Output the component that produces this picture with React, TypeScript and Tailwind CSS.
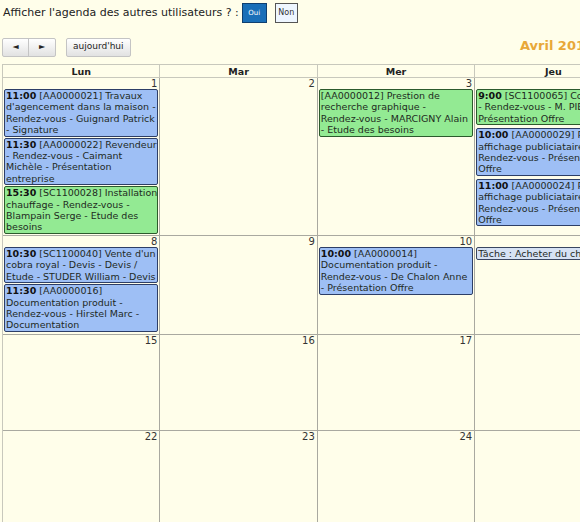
import React from "react";

type Ev = { time?: string; lines: string[]; color: "blue" | "green" | "task" };

const days = ["Lun", "Mar", "Mer", "Jeu", "Ven", "Sam", "Dim"];

const weeks: { num: number; gap?: boolean; events: Ev[] }[][] = [
  [
    {
      num: 1,
      events: [
        {
          time: "11:00",
          color: "blue",
          lines: [" [AA0000021] Travaux", "d'agencement dans la maison -", "Rendez-vous - Guignard Patrick", "- Signature"],
        },
        {
          time: "11:30",
          color: "blue",
          lines: [" [AA0000022] Revendeur", "- Rendez-vous - Caimant", "Michèle - Présentation", "entreprise"],
        },
        {
          time: "15:30",
          color: "green",
          lines: [" [SC1100028] Installation", "chauffage - Rendez-vous -", "Blampain Serge - Etude des", "besoins"],
        },
      ],
    },
    { num: 2, events: [] },
    {
      num: 3,
      events: [
        {
          color: "green",
          lines: ["[AA0000012] Prestion de", "recherche graphique -", "Rendez-vous - MARCIGNY Alain", "- Etude des besoins"],
        },
      ],
    },
    {
      num: 4,
      gap: true,
      events: [
        {
          time: "9:00",
          color: "green",
          lines: [" [SC1100065] Conseil", "- Rendez-vous - M. PIERRE -", "Présentation Offre"],
        },
        {
          time: "10:00",
          color: "blue",
          lines: [" [AA0000029] Pack", "affichage publiciataire -", "Rendez-vous - Présentation", "Offre"],
        },
        {
          time: "11:00",
          color: "blue",
          lines: [" [AA0000024] Pack", "affichage publiciataire -", "Rendez-vous - Présentation", "Offre"],
        },
      ],
    },
    { num: 5, events: [] },
    { num: 6, events: [] },
    { num: 7, events: [] },
  ],
  [
    {
      num: 8,
      events: [
        {
          time: "10:30",
          color: "blue",
          lines: [" [SC1100040] Vente d'un", "cobra royal - Devis - Devis /", "Etude - STUDER William - Devis"],
        },
        {
          time: "11:30",
          color: "blue",
          lines: [" [AA0000016]", "Documentation produit -", "Rendez-vous - Hirstel Marc -", "Documentation"],
        },
      ],
    },
    { num: 9, events: [] },
    {
      num: 10,
      events: [
        {
          time: "10:00",
          color: "blue",
          lines: [" [AA0000014]", "Documentation produit -", "Rendez-vous - De Chalon Anne", "- Présentation Offre"],
        },
      ],
    },
    { num: 11, events: [{ color: "task", lines: ["Tâche : Acheter du chocolat"] }] },
    { num: 12, events: [] },
    { num: 13, events: [] },
    { num: 14, events: [] },
  ],
  [15, 16, 17, 18, 19, 20, 21].map((n) => ({ num: n, events: [] })),
  [22, 23, 24, 25, 26, 27, 28].map((n) => ({ num: n, events: [] })),
];

const rowHeights = ["h-[158px]", "h-[99px]", "h-[96px]", "h-[96px]"];

function Event({ ev, gap }: { ev: Ev; gap?: boolean }) {
  const cls =
    ev.color === "blue"
      ? "bg-[#9ebff5] border-[#2d3e66]"
      : ev.color === "green"
      ? "bg-[#93ea93] border-[#2c5a2c]"
      : "bg-[#d6e2f4] border-[#3a4660]";
  return (
    <div
      className={`mx-[1px] ${gap ? "mb-[3px]" : "mb-[1px]"} border rounded-[2px] px-[1px] overflow-hidden whitespace-nowrap text-[#1e2a1e] ${cls}`}
    >
      {ev.lines.map((l, i) => (
        <div key={i}>
          {i === 0 && ev.time && <b className="text-[#111]">{ev.time}</b>}
          {l}
        </div>
      ))}
    </div>
  );
}

export default function App() {
  return (
    <div className="w-[580px] h-[522px] overflow-hidden bg-[#fffeea] text-[#222] font-['DejaVu_Sans',Verdana,sans-serif]">
      {/* filtre */}
      <div className="flex items-center h-[26px] pl-[3px] text-[11px]">
        <span>Afficher l'agenda des autres utilisateurs ? :</span>
        <span className="ml-[3px] w-[25px] h-[20px] flex items-center justify-center bg-[#1a6fb8] border border-[#0f3f70] text-white text-[7px]">
          Oui
        </span>
        <span className="ml-[8px] w-[23px] h-[20px] flex items-center justify-center bg-[#eef6ff] border border-[#555] text-[#333] text-[8px]">
          Non
        </span>
      </div>

      <div className="w-[1102px] ml-[2px]">
        {/* barre de navigation */}
        <div className="grid grid-cols-3 items-center h-[38px] pt-[4px]">
          <div className="flex items-center gap-[10px] text-[9px]">
            <div className="flex h-[19px] border border-[#c4c4c4] rounded-[2px] bg-gradient-to-b from-white to-[#e2e2e2]">
              <span className="w-[26px] flex items-center justify-center text-[8px] border-r border-[#c4c4c4]">◄</span>
              <span className="w-[26px] flex items-center justify-center text-[8px]">►</span>
            </div>
            <span className="h-[19px] px-[6px] flex items-center border border-[#c4c4c4] rounded-[2px] bg-gradient-to-b from-white to-[#e2e2e2]">
              aujourd'hui
            </span>
          </div>
          <div className="text-center text-[13px] font-bold text-[#e8a838] pb-[2px] pl-[8px]">Avril 2012</div>
          <div />
        </div>

        {/* calendrier */}
        <div className="border-l border-t border-[#c8c8bc]">
          <div className="grid grid-cols-[repeat(7,157.4px)]">
            {days.map((d) => (
              <div key={d} className="h-[13px] border-r border-b border-[#c8c8bc] text-center font-bold text-[9.5px] leading-[13px] text-[#222]">
                {d}
              </div>
            ))}
          </div>
          {weeks.map((w, wi) => (
            <div key={wi} className={`grid grid-cols-[repeat(7,157.4px)] ${rowHeights[wi]}`}>
              {w.map((c) => (
                <div key={c.num} className="border-r border-b border-[#a9a9a0] overflow-hidden text-[9.5px] leading-[11.4px]">
                  <div className="h-[11px] text-right pr-[2px] text-[10px] leading-[12px] text-[#333]">{c.num}</div>
                  {c.events.map((ev, i) => (
                    <Event key={i} ev={ev} gap={c.gap} />
                  ))}
                </div>
              ))}
            </div>
          ))}
        </div>
      </div>
    </div>
  );
}
